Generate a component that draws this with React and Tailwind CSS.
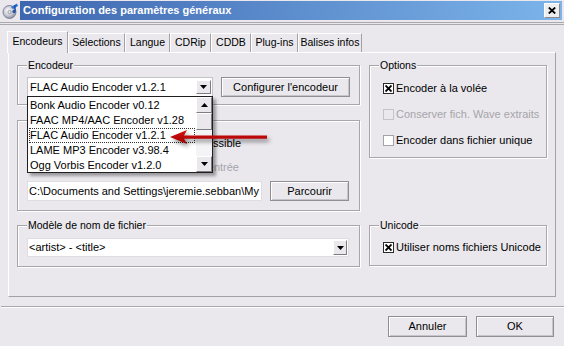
import React from "react";

const Tri = ({ up }) => (
  <svg width="7" height="4" viewBox="0 0 7 4">
    {up ? <polygon points="0,4 7,4 3.5,0" fill="#000" /> : <polygon points="0,0 7,0 3.5,4" fill="#000" />}
  </svg>
);

const Check = ({ checked, disabled }) => (
  <span
    className={`w-[11px] h-[11px] shrink-0 flex items-center justify-center border ${
      disabled ? "border-[#c4c3c7] bg-[#eae8ed]" : checked ? "border-[#2a2a2a] bg-white" : "border-[#a3a2a6] bg-white"
    }`}
  >
    {checked && (
      <svg width="7" height="7" viewBox="0 0 7 7">
        <path d="M0.5 0.5 L6.5 6.5 M6.5 0.5 L0.5 6.5" stroke="#000" strokeWidth="1.9" />
      </svg>
    )}
  </span>
);

const Btn = ({ children, className }) => (
  <div
    className={`flex items-center justify-center border border-[#8f8e92] bg-[#eae8ed] shadow-[inset_1px_1px_0_#ffffff,inset_-1px_-1px_0_#c6c5c9] ${className}`}
  >
    {children}
  </div>
);

const SmallBtn = ({ children, className }) => (
  <div
    className={`flex items-center justify-center border border-t-white border-l-white border-r-[#7d7c80] border-b-[#7d7c80] bg-[#eae8ed] ${className}`}
  >
    {children}
  </div>
);

const Group = ({ label, className, children }) => (
  <fieldset
    className={`border border-[#a7a6aa] shadow-[inset_1px_1px_0_#ffffff,1px_1px_0_#ffffff] p-0 m-0 min-w-0 ${className}`}
  >
    <legend className="ml-[9px] px-[1px] text-[10.5px] leading-[14px] bg-[#eae8ed]">{label}</legend>
    {children}
  </fieldset>
);

const CheckRow = ({ checked, disabled, children, className }) => (
  <div className={`flex items-center gap-[2px] h-[16px] whitespace-nowrap ${className || ""}`}>
    <Check checked={checked} disabled={disabled} />
    <span className={disabled ? "text-[#a6a5a9]" : "text-black"}>{children}</span>
  </div>
);

const tabs = [
  ["Sélections", "w-[57px]"],
  ["Langue", "w-[45px]"],
  ["CDRip", "w-[41px]"],
  ["CDDB", "w-[40px]"],
  ["Plug-ins", "w-[47px]"],
  ["Balises infos", "w-[64px]"],
];

const items = [
  "Bonk Audio Encoder v0.12",
  "FAAC MP4/AAC Encoder v1.28",
  "FLAC Audio Encoder v1.2.1",
  "LAME MP3 Encoder v3.98.4",
  "Ogg Vorbis Encoder v1.2.0",
];

export default function App() {
  return (
    <div className="relative w-[564px] h-[346px] overflow-hidden bg-[#eae8ed] text-[11px] text-black font-['Liberation_Sans',Arial,sans-serif]">
      {/* Title bar */}
      <div className="flex h-[21px] pt-[1px]">
        <div className="w-[20px] h-[19px] flex items-center justify-center">
          <svg width="17" height="17" viewBox="0 0 17 17">
            <defs>
              <radialGradient id="cd" cx="0.4" cy="0.4" r="0.7">
                <stop offset="0" stopColor="#ffffff" />
                <stop offset="0.5" stopColor="#c9ccd6" />
                <stop offset="1" stopColor="#7d8294" />
              </radialGradient>
            </defs>
            <circle cx="7.5" cy="10" r="6.5" fill="url(#cd)" stroke="#6b6f80" strokeWidth="0.8" />
            <circle cx="7.5" cy="10" r="1.6" fill="#eae8ed" stroke="#6b6f80" strokeWidth="0.6" />
            <path d="M9 5 L15 1.5 L16 4 L11 7 Z" fill="#2f6fd6" />
            <path d="M13 3 L13 9" stroke="#1f4fa8" strokeWidth="1.4" />
            <circle cx="12" cy="9.5" r="1.6" fill="#1f4fa8" />
          </svg>
        </div>
        <div className="w-[542px] h-[19px] flex items-center justify-between pl-[3px] pr-[2px] bg-gradient-to-r from-[#3f67b0] to-[#7cb4ea]">
          <span className="text-white font-bold text-[11px] leading-none">Configuration des paramètres généraux</span>
          <div className="w-[16px] h-[15px] bg-[#eeedf0] border border-t-white border-l-white border-r-[#8a898d] border-b-[#8a898d] flex items-center justify-center">
            <svg width="8" height="7" viewBox="0 0 8 7">
              <path d="M0.8 0.5 L7.2 6.5 M7.2 0.5 L0.8 6.5" stroke="#000" strokeWidth="1.8" />
            </svg>
          </div>
        </div>
      </div>
      <div className="mt-[1px] h-[3px] border-y border-[#a9a8ac]" />

      {/* Tabs */}
      <div className="mt-[6px] ml-[7px] h-[21px] flex items-end relative z-10 text-[10.5px]">
        <div className="w-[61px] h-[22px] -mb-[1px] bg-[#eae8ed] border-l border-t border-white border-r border-r-[#a2a1a5] flex items-center justify-center pb-[2px]">
          Encodeurs
        </div>
        {tabs.map(([t, w]) => (
          <div
            key={t}
            className={`${w} h-[19px] border-t border-l border-white border-r border-r-[#a2a1a5] flex items-center justify-center`}
          >
            {t}
          </div>
        ))}
      </div>

      {/* Panel */}
      <div className="ml-[8px] w-[548px] h-[245px] border border-t-white border-l-white border-r-[#a2a1a5] border-b-[#a2a1a5] pl-[8px] pt-[5px]">
        <div className="grid grid-cols-[343px_178px] gap-x-[9px] gap-y-[7px] items-start">
          {/* Left column, row 1 */}
          <div className="flex flex-col">
            <Group label="Encodeur">
              <div className="flex gap-[8px] px-[9px] pt-[5px] pb-[7px]">
                <div className="w-[186px] h-[20px] bg-white border border-[#c3c2c6] flex items-center pl-[2px]">
                  <span className="flex-1 whitespace-nowrap">FLAC Audio Encoder v1.2.1</span>
                  <SmallBtn className="w-[15px] h-[14px] mr-[1px]">
                    <Tri />
                  </SmallBtn>
                </div>
                <Btn className="w-[129px] h-[20px]">Configurer l'encodeur</Btn>
              </div>
            </Group>
            <Group label="Répertoire de sortie" className="mt-[8px]">
              <div className="flex flex-col px-[9px] pt-[8px] pb-[9px]">
                <CheckRow checked>Utiliser le dossier de la source si possible</CheckRow>
                <CheckRow disabled className="mt-[8px] ml-[22px]">
                  Même dossier que le fichier d'entrée
                </CheckRow>
                <div className="flex gap-[8px] mt-[6px]">
                  <div className="w-[235px] h-[20px] bg-white border border-[#dedde1] flex items-center pl-[1px] whitespace-nowrap">
                    C:\Documents and Settings\jeremie.sebban\My
                  </div>
                  <Btn className="w-[79px] h-[20px]">Parcourir</Btn>
                </div>
              </div>
            </Group>
          </div>

          {/* Right column, row 1 */}
          <Group label="Options" className="w-[178px]">
            <div className="flex flex-col gap-[10px] pl-[13px] pt-[8px] pb-[9px]">
              <CheckRow checked>Encoder à la volée</CheckRow>
              <CheckRow disabled>Conserver fich. Wave extraits</CheckRow>
              <CheckRow>Encoder dans fichier unique</CheckRow>
            </div>
          </Group>

          {/* Row 2 */}
          <Group label="Modèle de nom de fichier">
            <div className="px-[9px] pt-[6px] pb-[9px]">
              <div className="w-[322px] h-[19px] bg-white border border-[#dedde1] flex items-center pl-[1px]">
                <span className="flex-1 whitespace-nowrap">&lt;artist&gt; - &lt;title&gt;</span>
                <SmallBtn className="w-[14px] h-[15px] mr-[1px]">
                  <Tri />
                </SmallBtn>
              </div>
            </div>
          </Group>
          <Group label="Unicode" className="w-[178px]">
            <div className="pl-[13px] pt-[7px] pb-[10px]">
              <CheckRow checked>Utiliser noms fichiers Unicode</CheckRow>
            </div>
          </Group>
        </div>
      </div>

      {/* Separator */}
      <div className="mt-[9px] ml-[1px] h-[2px] border-t border-[#a9a8ac] border-b border-b-white" />

      {/* Buttons */}
      <div className="mt-[8px] flex justify-end gap-[9px] pr-[10px]">
        <Btn className="w-[79px] h-[21px]">Annuler</Btn>
        <Btn className="w-[78px] h-[21px]">OK</Btn>
      </div>

      {/* Open dropdown list */}
      <div className="absolute left-[27px] top-[96px] w-[186px] h-[77px] bg-white border border-[#1f1f1f] shadow-[3px_3px_3px_rgba(0,0,0,0.35)] flex z-20">
        <div className="w-[168px] pt-[1px]">
          {items.map((it, i) => (
            <div
              key={it}
              className={`mx-[1px] h-[15px] flex items-center whitespace-nowrap border ${
                i === 2 ? "border-dotted border-[#333333]" : "border-transparent"
              }`}
            >
              {it}
            </div>
          ))}
        </div>
        <div className="w-[16px] flex flex-col bg-[#f4f3f6]">
          <SmallBtn className="h-[16px]">
            <Tri up />
          </SmallBtn>
          <SmallBtn className="h-[17px]" />
          <div className="flex-1" />
          <SmallBtn className="h-[16px]">
            <Tri />
          </SmallBtn>
        </div>
      </div>

      {/* Red arrow */}
      <svg
        className="absolute left-[166px] top-[126px] z-30 drop-shadow-[2px_3px_2px_rgba(0,0,0,0.45)]"
        width="106"
        height="24"
        viewBox="0 0 106 24"
      >
        <defs>
          <linearGradient id="ar" x1="0" y1="0" x2="0" y2="1">
            <stop offset="0" stopColor="#d81010" />
            <stop offset="1" stopColor="#a00000" />
          </linearGradient>
        </defs>
        <path d="M4 11 L21 4 L18 9.5 L101 9.5 L101 12.8 L18 12.8 L21 18 Z" fill="url(#ar)" />
      </svg>
    </div>
  );
}
